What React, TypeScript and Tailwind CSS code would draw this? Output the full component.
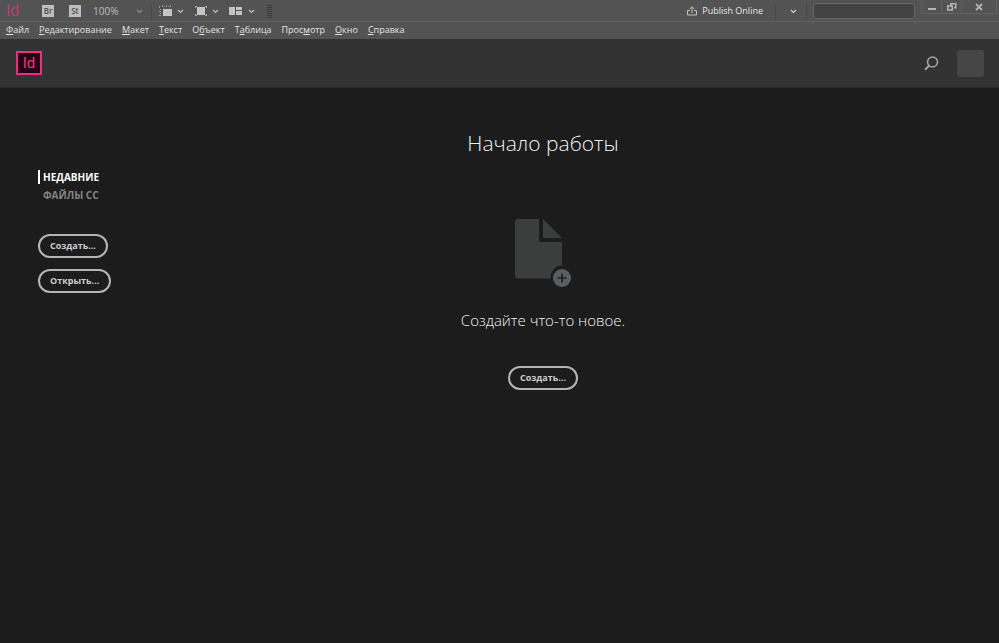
import React from "react";

type MenuItem = {
    before: string;
    key: string;
    after: string;
}

const menu: MenuItem[] = [
    { before: "", key: "Ф", after: "айл" },
    { before: "", key: "Р", after: "едактирование" },
    { before: "", key: "М", after: "акет" },
    { before: "", key: "Т", after: "екст" },
    { before: "О", key: "б", after: "ъект" },
    { before: "Т", key: "а", after: "блица" },
    { before: "Прос", key: "м", after: "отр" },
    { before: "", key: "О", after: "кно" },
    { before: "", key: "С", after: "правка" },
];

const Chevron = ({ className = "" }: { className?: string }) => (
    <svg className={className} width="7" height="5" viewBox="0 0 7 5" fill="none" stroke="currentColor" strokeWidth="1.2">
        <path d="M1 1l2.5 2.5L6 1" />
    </svg>
);

const Separator = () => <div className="w-px h-4 bg-[#484848]" />;

const FrameIcon = () => (
    <svg width="14" height="12" viewBox="0 0 14 12">
        <rect x="4" y="4" width="9" height="7" fill="#c4c4c4" />
        <path d="M0 1h1v2H0zM3 0h1v2H3zM5 1h1v1H5zM7 0h1v2H7zM9 1h1v1H9zM11 0h1v2h-1zM1 4h1v1H1zM0 6h2v1H0zM1 8h1v1H1zM0 10h2v1H0z" fill="#989898" />
    </svg>
);

const ScreenModeIcon = () => (
    <svg width="12" height="12" viewBox="0 0 12 12">
        <rect x="2" y="2" width="8" height="8" fill="#c4c4c4" />
        <path d="M0 1h2v1H1v1H0zM10 1h2v2h-1V2h-1zM0 9h1v1h1v1H0zM11 9h1v2h-2v-1h1z" fill="#a8a8a8" />
    </svg>
);

const ArrangeIcon = () => (
    <svg width="14" height="10" viewBox="0 0 14 10" fill="#c4c4c4">
        <path d="M0 1h6v8H0zM7 1h6v3H7zM7 5h6v4H7z" />
    </svg>
);

function Toolbar() {
    return (
        <div className="flex h-[22px] items-start justify-between border-b border-[#606060]">
            <div className="flex h-[22px] items-center pl-1.5 text-[#bdbdbd]">
                <span className="w-9 font-[Roboto,sans-serif] text-[16px] leading-5 text-[#b83f78]">Id</span>
                <button className="flex h-3 w-3 items-center justify-center bg-[#bebebe] text-[8px] font-semibold text-[#505050]">Br</button>
                <button className="ml-[15px] flex h-3 w-3 items-center justify-center bg-[#bebebe] text-[8px] font-semibold text-[#505050]">St</button>
                <button className="ml-3 flex w-[50px] items-center justify-between text-[10px]">
                    100%
                    <Chevron className="text-[#8e8e8e]" />
                </button>
                <div className="mr-[7px] ml-2 flex items-center"><Separator /></div>
                <button aria-label="Параметры просмотра" className="flex items-center gap-1"><FrameIcon /><Chevron /></button>
                <button aria-label="Режим экрана" className="ml-[11px] flex items-center gap-[5px]"><ScreenModeIcon /><Chevron /></button>
                <button aria-label="Упорядочить документы" className="ml-[10px] flex items-center gap-[5px]"><ArrangeIcon /><Chevron /></button>
                <div className="ml-3 flex w-[5px] flex-col gap-px">
                    {[0, 1, 2, 3, 4, 5, 6].map((i) => <i key={i} className="h-px bg-[#383838]" />)}
                </div>
            </div>
            <div className="flex">
                <div className="flex h-[22px] items-center">
                    <button className="flex items-center gap-[5px] text-[9px] font-medium text-[#e8e8e8]">
                        <svg width="10" height="10" viewBox="0 0 10 10" fill="none" stroke="#c0c0c0">
                            <path d="M3 4.5H.5v4.500h9v-4.500H7M5 7V1M2.8 3L5 .8 7.2 3" />
                        </svg>
                        Publish Online
                    </button>
                    <div className="ml-3"><Separator /></div>
                    <button aria-label="Рабочая среда" className="mr-[9px] ml-[14px] text-[#d0d0d0]"><Chevron /></button>
                    <Separator />
                    <input aria-label="Поиск" className="ml-1.5 h-4 w-[102px] rounded-[3px] border border-[#696969] bg-[#434343] px-1 text-[10px] text-[#ddd]" />
                </div>
                <div className="mr-0.5 ml-1.5 flex h-[14px] rounded-b-[3px] border border-t-0 border-[#636363] text-[#b4b4b4]">
                    <button aria-label="Свернуть" className="flex w-5 items-center justify-center border-r border-[#636363]">
                        <svg width="8" height="8" viewBox="0 0 8 8" fill="currentColor"><path d="M0 5h8v2H0z" /></svg>
                    </button>
                    <button aria-label="Восстановить" className="flex w-5 items-center justify-center border-r border-[#636363]">
                        <svg width="10" height="8" viewBox="0 0 10 8" fill="none" stroke="currentColor" strokeWidth="1.5">
                            <path d="M3.75 2.5V.75h5v4H7M.75 3h4.5v4H.75z" />
                        </svg>
                    </button>
                    <button aria-label="Закрыть" className="flex w-[34px] items-center justify-center">
                        <svg width="8" height="8" viewBox="0 0 8 8" fill="none" stroke="currentColor" strokeWidth="1.8">
                            <path d="M1 1l6 6M7 1L1 7" />
                        </svg>
                    </button>
                </div>
            </div>
        </div>
    );
}

function MenuBar() {
    return (
        <nav className="flex h-[17px] items-start gap-2.5 pl-1.5 text-[9px] text-[#e2e2e2]">
            {menu.map((item) => (
                <button key={item.before + item.key + item.after} className="leading-[15px]">
                    {item.before}<span className="underline">{item.key}</span>{item.after}
                </button>
            ))}
        </nav>
    );
}

function Header() {
    return (
        <header className="flex h-[49px] items-center justify-between border-b border-[#292929] bg-[#323232] pr-[15px] pl-4">
            <div className="flex h-6 w-[26px] items-center justify-center border-2 border-[#e5308a] bg-[#29000f] font-[Roboto,sans-serif] text-[15px] leading-5 text-[#f0338f]">Id</div>
            <div className="flex items-center gap-[18px]">
                <button aria-label="Найти">
                    <svg width="15" height="15" viewBox="0 0 15 15" fill="none" stroke="#a3a3a3">
                        <circle cx="8.5" cy="6" r="5" strokeWidth="1.6" />
                        <path d="M5 9.8L1 13.8" strokeWidth="2" />
                    </svg>
                </button>
                <button aria-label="Профиль" className="h-[27px] w-[27px] rounded-[3px] bg-[#464646]" />
            </div>
        </header>
    );
}

const PillButton = ({ children }: { children: React.ReactNode }) => (
    <button className="h-6 rounded-full border-2 border-[#b5b5b5] px-2.5 text-[9px] leading-5 font-bold text-[#cccccc]">
        {children}
    </button>
);

const NewFileIcon = () => (
    <svg width="58" height="69" viewBox="0 0 58 69">
        <path d="M3 0h21v20q0 3 3 3h20v23.500a12 12 0 0 0-11.500 13H3q-3 0-3-3V3q0-3 3-3z" fill="#3c3d3d" />
        <path d="M28 0l19 19H28z" fill="#3c3d3d" />
        <circle cx="47" cy="59" r="9" fill="#5c5d5f" />
        <path d="M47 54.500v9M42.500 59h9" stroke="#1c1c1c" strokeWidth="1.600" />
    </svg>
);

export default function App() {
    return (
        <div className="flex min-h-screen flex-col bg-[#1c1c1c] font-['Open_Sans','Noto_Sans',sans-serif]">
            <div className="bg-[#535353]">
                <Toolbar />
                <MenuBar />
            </div>
            <Header />
            <div className="flex flex-1">
                <aside className="w-[127px] shrink-0 pt-[82px] pl-[38px]">
                    <nav className="flex flex-col gap-1 text-[10px] leading-[14px] font-bold">
                        <a href="#recent" className="border-l-2 border-white pl-[3px] text-white">НЕДАВНИЕ</a>
                        <a href="#cc" className="border-l-2 border-transparent pl-[3px] text-[#858585]">ФАЙЛЫ CC</a>
                    </nav>
                    <div className="mt-8 flex flex-col items-start gap-[11px]">
                        <PillButton>Создать...</PillButton>
                        <PillButton>Открыть...</PillButton>
                    </div>
                </aside>
                <main className="flex flex-1 flex-col items-center pt-[39px] pr-10 text-[#f0f0f0]">
                    <h1 className="text-[21px] leading-8 font-light">Начало работы</h1>
                    <div className="mt-[60px] pl-0.5"><NewFileIcon /></div>
                    <p className="mt-5 mb-[34px] text-[15px] leading-6 font-light">Создайте что-то новое.</p>
                    <PillButton>Создать...</PillButton>
                </main>
            </div>
        </div>
    );
}
